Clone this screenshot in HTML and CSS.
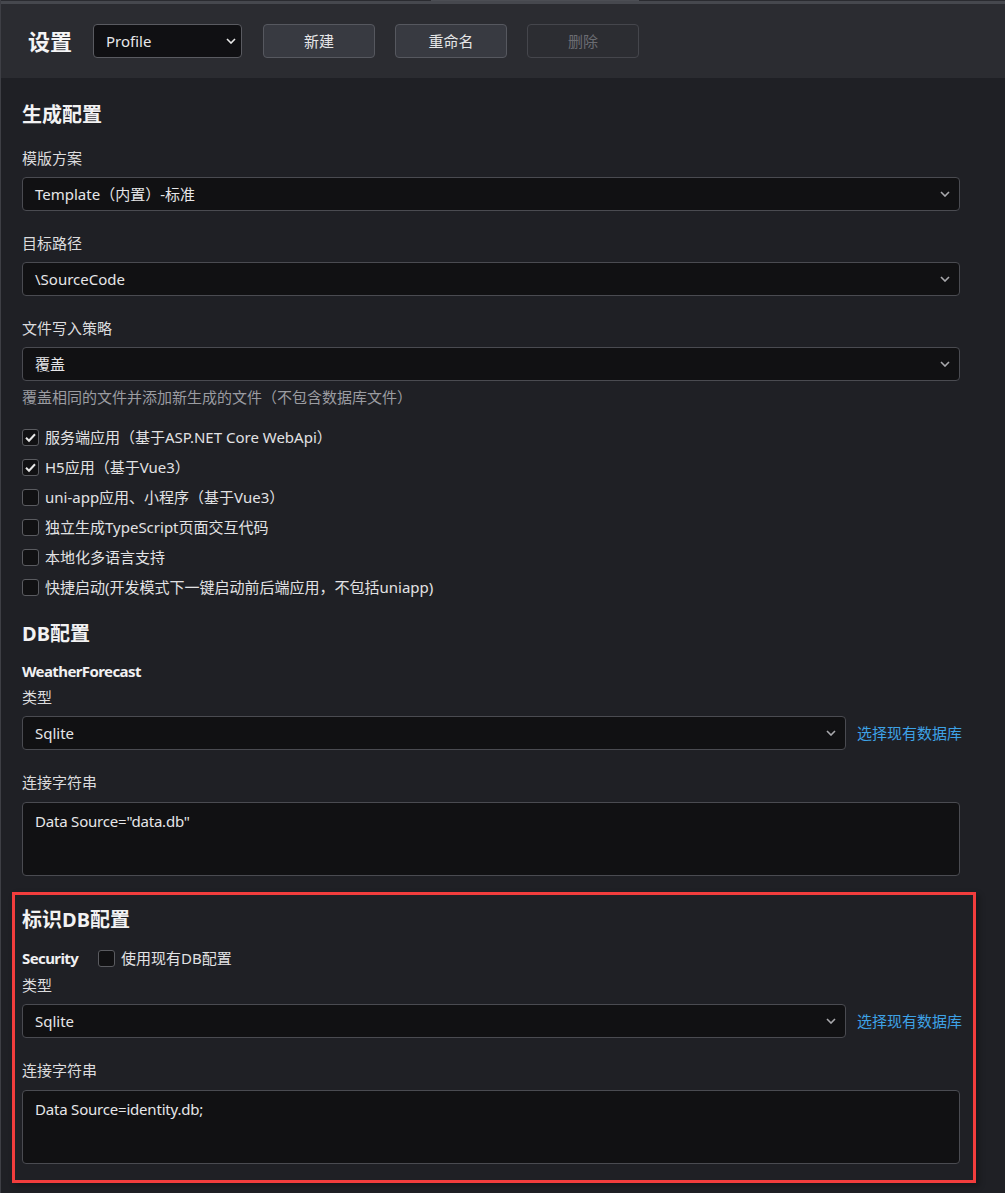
FILE: index.html
```html
<!DOCTYPE html>
<html lang="zh-CN">
<head>
<meta charset="utf-8">
<title>设置</title>
<link rel="stylesheet" href="styles.css">
</head>
<body>
<div class="app">
  <div class="topbar">
    <div class="seg seg-a"></div>
    <div class="seg seg-b"></div>
    <div class="seg seg-c"></div>
  </div>
  <header class="header">
    <h1 class="title">设置</h1>
    <div class="profile-select">
      <span>Profile</span>
      <svg class="chev" width="10" height="6" viewBox="0 0 10 6"><polyline points="1,1 5,5 9,1" fill="none" stroke="#e8e8e8" stroke-width="1.6"/></svg>
    </div>
    <div class="btns">
      <button class="btn">新建</button>
      <button class="btn">重命名</button>
      <button class="btn btn-disabled">删除</button>
    </div>
  </header>

  <main class="main">
    <h2 class="h2">生成配置</h2>

    <div class="group">
      <div class="label">模版方案</div>
      <div class="select"><span>Template（内置）-标准</span><svg class="chev" width="10" height="6" viewBox="0 0 10 6"><polyline points="1,1 5,5 9,1" fill="none" stroke="#a9a9ad" stroke-width="1.6"/></svg></div>
    </div>
    <div class="group">
      <div class="label">目标路径</div>
      <div class="select"><span>\SourceCode</span><svg class="chev" width="10" height="6" viewBox="0 0 10 6"><polyline points="1,1 5,5 9,1" fill="none" stroke="#a9a9ad" stroke-width="1.6"/></svg></div>
    </div>
    <div class="group group-help">
      <div class="label">文件写入策略</div>
      <div class="select"><span>覆盖</span><svg class="chev" width="10" height="6" viewBox="0 0 10 6"><polyline points="1,1 5,5 9,1" fill="none" stroke="#a9a9ad" stroke-width="1.6"/></svg></div>
      <div class="help">覆盖相同的文件并添加新生成的文件（不包含数据库文件）</div>
    </div>

    <div class="checklist">
      <label class="check-row"><span class="box checked"><svg width="15" height="15" viewBox="0 0 15 15"><polyline points="3,7.8 6,10.8 12,4.3" fill="none" stroke="#e8e8e8" stroke-width="2"/></svg></span><span>服务端应用（基于ASP.NET Core WebApi）</span></label>
      <label class="check-row"><span class="box checked"><svg width="15" height="15" viewBox="0 0 15 15"><polyline points="3,7.8 6,10.8 12,4.3" fill="none" stroke="#e8e8e8" stroke-width="2"/></svg></span><span>H5应用（基于Vue3）</span></label>
      <label class="check-row"><span class="box"></span><span>uni-app应用、小程序（基于Vue3）</span></label>
      <label class="check-row"><span class="box"></span><span>独立生成TypeScript页面交互代码</span></label>
      <label class="check-row"><span class="box"></span><span>本地化多语言支持</span></label>
      <label class="check-row"><span class="box"></span><span>快捷启动(开发模式下一键启动前后端应用，不包括uniapp)</span></label>
    </div>

    <h2 class="h2 h2-section">DB配置</h2>
    <div class="subtitle">WeatherForecast</div>
    <div class="group">
      <div class="label">类型</div>
      <div class="db-row">
        <div class="select select-db"><span>Sqlite</span><svg class="chev" width="10" height="6" viewBox="0 0 10 6"><polyline points="1,1 5,5 9,1" fill="none" stroke="#a9a9ad" stroke-width="1.6"/></svg></div>
        <a class="link">选择现有数据库</a>
      </div>
    </div>
    <div class="group-last">
      <div class="label label-ta">连接字符串</div>
      <div class="textarea">Data Source="data.db"</div>
    </div>

    <section class="highlight">
      <h2 class="h2 h2-box">标识DB配置</h2>
      <div class="sec-row">
        <span class="subtitle-inline">Security</span>
        <label class="check-inline"><span class="box"></span><span>使用现有DB配置</span></label>
      </div>
      <div class="group">
        <div class="label">类型</div>
        <div class="db-row">
          <div class="select select-db"><span>Sqlite</span><svg class="chev" width="10" height="6" viewBox="0 0 10 6"><polyline points="1,1 5,5 9,1" fill="none" stroke="#a9a9ad" stroke-width="1.6"/></svg></div>
          <a class="link">选择现有数据库</a>
        </div>
      </div>
      <div>
        <div class="label label-ta">连接字符串</div>
        <div class="textarea">Data Source=identity.db;</div>
      </div>
    </section>
  </main>
</div>
</body>
</html>
```

FILE: styles.css
```css
* { box-sizing: border-box; }

html, body {
  margin: 0;
  padding: 0;
  background: #1f2025;
}

body {
  font-family: "Noto Sans", "Noto Sans CJK SC", sans-serif;
  font-size: 15px;
  line-height: 22px;
  color: #e2e2e4;
}

.app {
  min-height: 1193px;
  border-left: 1px solid #3e3f45;
}

.topbar {
  display: flex;
  height: 4px;
  background: #46484e;
}
.seg { height: 1px; }
.seg-a { width: 430px; background: #2a2b30; }
.seg-b { width: 208px; background: #4c4e54; }
.seg-c { flex: 1; background: #2a2b30; }

.header {
  display: flex;
  align-items: center;
  height: 74px;
  padding-left: 27px;
  background: #2b2c31;
}

.title {
  margin: 0;
  font-size: 22px;
  line-height: 30px;
  font-weight: 700;
  color: #f4f4f5;
}

.profile-select {
  display: flex;
  align-items: center;
  justify-content: space-between;
  width: 149px;
  height: 34px;
  margin-left: 21px;
  padding: 0 5px 0 12px;
  background: #101013;
  border: 1px solid #5a5b61;
  border-radius: 4px;
  color: #e8e8ea;
}

.btns {
  display: flex;
  gap: 20px;
  margin-left: 21px;
}

.btn {
  width: 112px;
  height: 34px;
  font: inherit;
  color: #e6e6e8;
  background: #383a41;
  border: 1px solid #56585f;
  border-radius: 4px;
  padding: 0;
}

.btn-disabled {
  background: #2c2d32;
  border-color: #45464c;
  color: #6b6c72;
}

.main {
  padding: 23px 45px 20px 21px;
}

.h2 {
  margin: 0 0 18px;
  font-size: 20px;
  line-height: 28px;
  font-weight: 700;
  color: #f2f2f3;
}

.h2-section { margin-top: 18px; margin-bottom: 12px; }
.h2-box { margin-bottom: 13px; }

.label {
  margin-bottom: 8px;
  color: #dcdcde;
}
.label-ta { margin-bottom: 9px; }

.group { margin-bottom: 21px; }
.group-help { margin-bottom: 14px; }

.select {
  display: flex;
  align-items: center;
  justify-content: space-between;
  height: 34px;
  padding: 0 9px 0 12px;
  background: #111113;
  border: 1px solid #4a4b51;
  border-radius: 4px;
  color: #e6e6e8;
}

.help {
  margin-top: 5px;
  color: #9b9ca1;
}

.checklist {
  display: flex;
  flex-direction: column;
}

.check-row {
  display: flex;
  align-items: center;
  height: 30px;
  gap: 6px;
  color: #e2e2e4;
}

.box {
  display: flex;
  align-items: center;
  justify-content: center;
  width: 17px;
  height: 17px;
  flex: none;
  background: #111113;
  border: 1px solid #5a5b60;
  border-radius: 3px;
}

.subtitle {
  font-weight: 700;
  letter-spacing: -0.6px;
  color: #f0f0f2;
  margin-bottom: 4px;
}

.db-row {
  display: flex;
  align-items: center;
  gap: 11px;
  margin-right: -6px;
}

.select-db { flex: 0 0 824px; }

.link {
  color: #3ea2e6;
  white-space: nowrap;
  cursor: pointer;
}

.textarea {
  height: 74px;
  padding: 7px 12px;
  background: #111113;
  border: 1px solid #4a4b51;
  border-radius: 4px;
  color: #e6e6e8;
  letter-spacing: -0.2px;
}

.group-last { margin-bottom: 16px; }

.highlight {
  margin: 0 -16px 0 -10px;
  padding: 11px 13px 16px 7px;
  border: 3px solid #f23d3d;
  box-shadow: 3px 3px 6px rgba(0, 0, 0, 0.3);
}

.sec-row {
  display: flex;
  align-items: center;
  height: 22px;
  margin-bottom: 5px;
}

.subtitle-inline {
  font-weight: 700;
  letter-spacing: -0.6px;
  color: #f0f0f2;
  width: 76px;
}

.check-inline {
  display: flex;
  align-items: center;
  gap: 6px;
}
```
